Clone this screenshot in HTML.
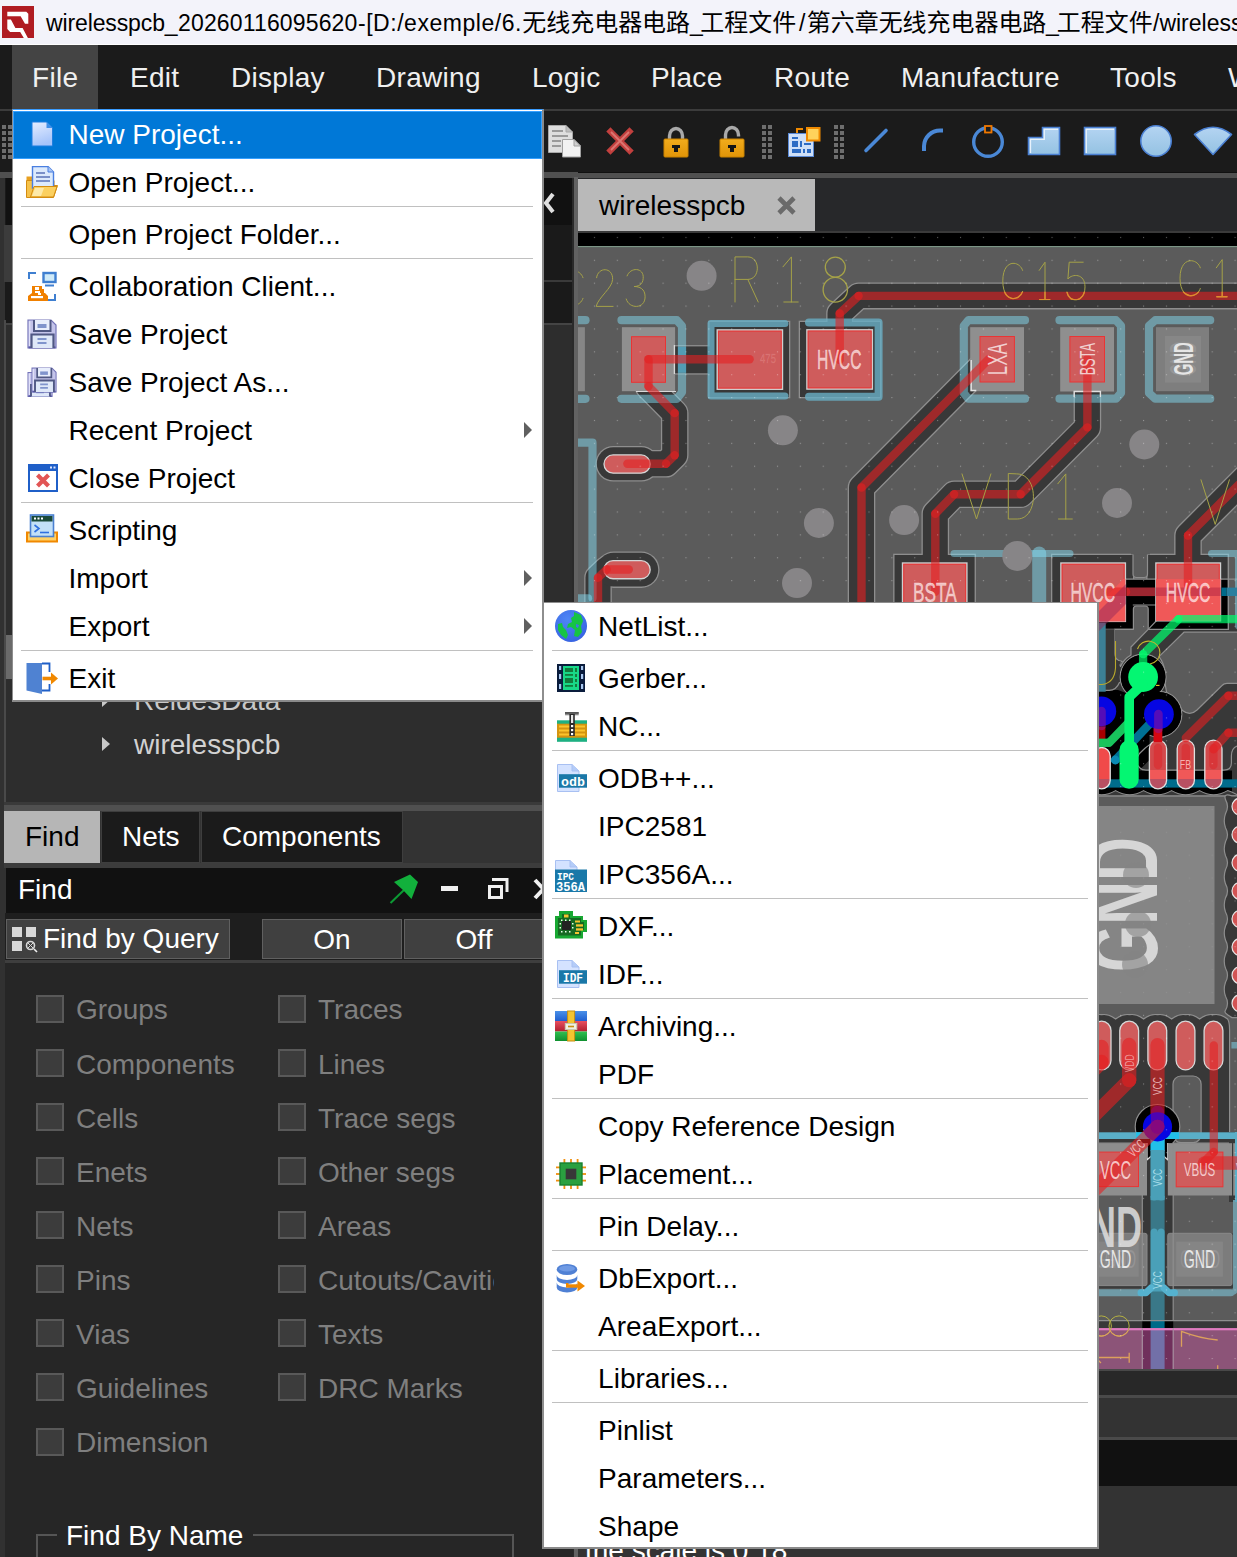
<!DOCTYPE html>
<html><head><meta charset="utf-8">
<style>
*{box-sizing:border-box;margin:0;padding:0}
html,body{width:1237px;height:1557px;overflow:hidden;background:#2b2b2b}
body{font-family:"Liberation Sans",sans-serif;position:relative;color:#fff}
.abs{position:absolute}
#title{left:0;top:0;width:1237px;height:45px;background:#f3f3fa;overflow:hidden;border-bottom:1px solid #fff}
#title span{position:absolute;top:8px;font-size:23px;line-height:30px;color:#000;white-space:nowrap}
#menubar{left:0;top:45px;width:1237px;height:64px;background:#1b1b1b;overflow:hidden}
#menubar .mi{position:absolute;top:0;height:64px;line-height:65px;font-size:28px;letter-spacing:0.3px;color:#f0f0f0;white-space:nowrap}
#toolbar{left:0;top:109px;width:1237px;height:63px;background:#1b1b1b;border-top:2px solid #3c3c3c}
.menu{background:#fff;border:1px solid #8e8e8e;border-right:2px solid #8a8a8a;border-bottom:2px solid #8a8a8a;color:#000;font-size:28px;letter-spacing:0}
.menu .it{position:absolute;left:0;right:0;height:48px;line-height:48px;white-space:nowrap}
.menu .it.hl{background:#0078d7;border:1px solid #35a0ff;color:#fff;left:0;right:0}
.menu .it b{font-weight:normal;position:absolute;left:55.500px;top:0}
.menu .it.hl b{left:54.500px;top:-1px}
.menu .sep{position:absolute;left:8px;right:9px;height:1px;background:#c0c0c0;margin-top:-1px}
#fm{border-top-color:#3a9cff}
#sm{border-top-width:1.500px;border-left-width:2.300px}
#sm .it b{left:54.300px}
#sm svg{left:11.500px}
.menu .arr{position:absolute;right:10px;top:15px;width:0;height:0;border-left:8px solid #606060;border-top:8px solid transparent;border-bottom:8px solid transparent}
.menu svg{position:absolute;left:13px}
.menu .it.hl svg{left:12px;margin-top:-1px}
#left{left:0;top:172px;width:578px;height:1385px;background:#313131;overflow:hidden}
#left .t{position:absolute;font-size:28px;letter-spacing:0;line-height:32px;white-space:nowrap}
.cb{position:absolute;width:28px;height:28px;background:#3c3c3c;border:2px solid #595959}
.cl{position:absolute;font-size:28px;letter-spacing:0;line-height:32px;color:#7f7f7f;white-space:nowrap}
.btn{position:absolute;background:#404040;border:1px solid #606060;color:#fff;font-size:28px;letter-spacing:0;text-align:center;white-space:nowrap}
</style></head>
<body>
<!-- TITLE BAR -->
<div id="title" class="abs">
<svg class="abs" style="left:0;top:0" width="40" height="45" viewBox="0 0 40 45"><rect x="2" y="6" width="32" height="32" fill="#b01c22"/><path d="M7.300 11.700 H26.300 L28.300 13.700 V23.800 H25 L20.600 16.200 H7.300Z M7.300 19.400 H10.900 L15.400 27.900 H22.600 L27.900 38 H23.800 L20.200 31.900 H10.100 L7.300 29.100Z" fill="#fff"/></svg>
<svg class="abs" style="left:0;top:0" width="1237" height="45" viewBox="0 0 1237 45"><g fill="#000" font-size="24" font-family="'Liberation Sans','Noto Sans CJK SC',sans-serif"><text x="522.3" y="30.6" textLength="167.7" lengthAdjust="spacingAndGlyphs">无线充电器电路</text><text x="700.3" y="30.6" textLength="95.8" lengthAdjust="spacingAndGlyphs">工程文件</text><text x="806.8" y="30.6" textLength="239.5" lengthAdjust="spacingAndGlyphs">第六章无线充电器电路</text><text x="1056.8" y="30.6" textLength="95.8" lengthAdjust="spacingAndGlyphs">工程文件</text></g></svg>
<span id="t1" style="left:46px;letter-spacing:-0.12px">wirelesspcb_</span><span id="t2" style="left:178px;letter-spacing:0.15px">20260116095620</span><span id="t3" style="left:358px;letter-spacing:0.53px">-[D:/exemple/6.</span><span id="t4" style="left:690px">_</span><span id="t5" style="left:799px">/</span><span id="t6" style="left:1046px">_</span><span id="t7" style="left:1153px">/wireless</span>
</div>
<!-- MENUBAR -->
<div id="menubar" class="abs">
<div class="abs" style="left:12px;top:0;width:86px;height:64px;background:#444"></div>
<div class="mi" style="left:32px">File</div>
<div class="mi" style="left:130px">Edit</div>
<div class="mi" style="left:231px">Display</div>
<div class="mi" style="left:376px">Drawing</div>
<div class="mi" style="left:532px">Logic</div>
<div class="mi" style="left:651px">Place</div>
<div class="mi" style="left:774px">Route</div>
<div class="mi" style="left:901px">Manufacture</div>
<div class="mi" style="left:1110px">Tools</div>
<div class="mi" style="left:1228px">Window</div>
</div>
<div id="toolbar" class="abs"></div>
<svg class="abs" style="left:0;top:111px" width="1237" height="61" viewBox="0 111 1237 61">
<defs><linearGradient id="lb" x1="0" y1="0" x2="0" y2="1"><stop offset="0" stop-color="#b4d4f2"/><stop offset="1" stop-color="#94c2e2"/></linearGradient>
<linearGradient id="gold" x1="0" y1="0" x2="0" y2="1"><stop offset="0" stop-color="#f2ac1c"/><stop offset="1" stop-color="#e09408"/></linearGradient></defs>
<g fill="#6e6e6e"><rect x="2" y="125" width="4" height="4"/><rect x="2" y="131" width="4" height="4"/><rect x="2" y="137" width="4" height="4"/><rect x="2" y="143" width="4" height="4"/><rect x="2" y="149" width="4" height="4"/><rect x="2" y="155" width="4" height="4"/><rect x="8" y="125" width="4" height="4"/><rect x="8" y="131" width="4" height="4"/><rect x="8" y="137" width="4" height="4"/><rect x="8" y="143" width="4" height="4"/><rect x="8" y="149" width="4" height="4"/><rect x="8" y="155" width="4" height="4"/><rect x="762" y="125" width="4" height="4"/><rect x="762" y="131" width="4" height="4"/><rect x="762" y="137" width="4" height="4"/><rect x="762" y="143" width="4" height="4"/><rect x="762" y="149" width="4" height="4"/><rect x="762" y="155" width="4" height="4"/><rect x="768" y="125" width="4" height="4"/><rect x="768" y="131" width="4" height="4"/><rect x="768" y="137" width="4" height="4"/><rect x="768" y="143" width="4" height="4"/><rect x="768" y="149" width="4" height="4"/><rect x="768" y="155" width="4" height="4"/><rect x="834" y="125" width="4" height="4"/><rect x="834" y="131" width="4" height="4"/><rect x="834" y="137" width="4" height="4"/><rect x="834" y="143" width="4" height="4"/><rect x="834" y="149" width="4" height="4"/><rect x="834" y="155" width="4" height="4"/><rect x="840" y="125" width="4" height="4"/><rect x="840" y="131" width="4" height="4"/><rect x="840" y="137" width="4" height="4"/><rect x="840" y="143" width="4" height="4"/><rect x="840" y="149" width="4" height="4"/><rect x="840" y="155" width="4" height="4"/></g>
<!-- copy docs -->
<path d="M548.5 125.5 H566 L572.5 132 V152.5 H548.5Z" fill="#dedede" stroke="#a8a8a8"/><path d="M566 125.5 V132 H572.5" fill="#bdbdbd" stroke="#a8a8a8"/>
<g stroke="#9a9a9a" stroke-width="2"><path d="M552 131 H563 M552 136 H568 M552 141 H561 M552 146 H561"/></g>
<path d="M562.5 139.5 H574 L580.5 146 V157 H562.5Z" fill="#f2f2f2" stroke="#a0a0a0"/><path d="M574 139.5 V146 H580.5Z" fill="#cfcfcf" stroke="#a0a0a0"/>
<!-- red X -->
<path d="M610.500 131.500 L629.500 150.500 M629.500 131.500 L610.500 150.500" stroke="#c2403e" stroke-width="6" stroke-linecap="square"/><path d="M611 132 L629 150 M629 132 L611 150" stroke="#dc7672" stroke-width="1.800"/>
<!-- lock -->
<path d="M669.5 141 V136 A6.5 7.5 0 0 1 682.5 136 V141" fill="none" stroke="#a9a9a9" stroke-width="3.4"/>
<rect x="664" y="139" width="24" height="18" rx="1" fill="url(#gold)" stroke="#c98200"/><path d="M672 145 H680 V148 H678 V152 H674 V148 H672Z" fill="#151515"/>
<!-- unlock -->
<path d="M725.5 141 V135 A6.5 7.5 0 0 1 738.5 135 V136.5" fill="none" stroke="#a9a9a9" stroke-width="3.4"/>
<rect x="720" y="139" width="24" height="18" rx="1" fill="url(#gold)" stroke="#c98200"/><path d="M728 145 H736 V148 H734 V152 H730 V148 H728Z" fill="#151515"/>
<!-- property table -->
<rect x="788.5" y="133.5" width="25" height="23" fill="#cfe0f8" stroke="#5b8bd8"/>
<g fill="#2d6cc4"><rect x="792" y="137" width="6" height="2"/><rect x="792" y="141" width="6" height="6"/><rect x="792" y="149" width="9" height="4"/><rect x="803" y="149" width="2" height="4"/><rect x="807" y="149" width="4" height="4"/><rect x="800" y="141" width="2" height="6"/><rect x="804" y="143" width="7" height="2"/></g>
<path d="M797 133 V129 H803" fill="none" stroke="#f08a00" stroke-width="2"/>
<rect x="807" y="128" width="12.5" height="12.5" fill="#ffd25c" stroke="#f08a00" stroke-width="2"/>
<!-- line, arc, circle -->
<path d="M866 150.5 L886 130.5" stroke="#4a88d6" stroke-width="3.6" stroke-linecap="round"/>
<path d="M924 151 V146 A16 16 0 0 1 940 130.5 H943" fill="none" stroke="#4a88d6" stroke-width="4"/>
<circle cx="988" cy="142" r="14.3" fill="none" stroke="#4a88d6" stroke-width="3.4"/><rect x="985" y="126" width="6.5" height="6.5" fill="#1b1b1b" stroke="#f07800" stroke-width="1.8"/>
<!-- filled shapes -->
<path d="M1028.5 154.5 V137.5 H1042.5 V127.5 H1059.5 V154.5Z" fill="url(#lb)" stroke="#4a7fd2" stroke-width="1.6"/><path d="M1030.5 153 V139.3 H1044.3 V129.3 H1058" fill="none" stroke="#e8f2fc" stroke-width="1.3"/>
<rect x="1084.5" y="127.5" width="31" height="27" fill="url(#lb)" stroke="#4a7fd2" stroke-width="1.6"/><path d="M1086.3 153 V129.3 H1114" fill="none" stroke="#e8f2fc" stroke-width="1.3"/>
<circle cx="1156" cy="141" r="15.2" fill="url(#lb)" stroke="#4a7fd2" stroke-width="1.6"/>
<path d="M1194.5 134.5 Q1213 120 1231.5 134.5 L1213 154.5Z" fill="url(#lb)" stroke="#4a7fd2" stroke-width="1.6" stroke-linejoin="round"/>
</svg>
<!-- MAIN placeholder sections get added below -->
<div id="left" class="abs">
<div class="abs" style="left:0;top:0;width:578px;height:6px;background:#505050"></div>
<div class="abs" style="left:5px;top:6px;width:568px;height:145px;background:#1a1a1a"></div>
<div class="abs" style="left:5px;top:151px;width:568px;height:479px;background:#2d2d2d;border-top:2px solid #444"></div>
<div class="abs" style="left:544px;top:6px;width:29px;height:47px;background:#111"></div>
<div class="abs" style="left:4px;top:148px;width:2px;height:482px;background:#4a4a4a"></div>
<div class="abs" style="left:6px;top:6px;width:6px;height:46.500px;background:#111"></div>
<div class="abs" style="left:4px;top:52.500px;width:8px;height:57px;background:#3c3c3c"></div>
<div class="abs" style="left:6px;top:463px;width:6px;height:44px;background:#6a6a6a"></div>
<div class="abs" style="left:544px;top:108px;width:29px;height:2px;background:#3a3a3a"></div>
<svg class="abs" style="left:544px;top:20px" width="12" height="22" viewBox="0 0 12 22"><path d="M9 2 L2 11 L9 20" fill="none" stroke="#e0e0e0" stroke-width="4"/></svg>
<div class="abs" style="left:572px;top:6px;width:2px;height:1379px;background:#2a2a2a"></div><div class="abs" style="left:574px;top:5px;width:4px;height:1380px;background:#626262"></div>
<!-- tree -->
<div class="t" style="left:134px;top:513.400px;color:#c8c8c8">ReidesData</div>
<div class="t" style="left:134px;top:557px;color:#d2d2d2">wirelesspcb</div>
<svg class="abs" style="left:101px;top:564px" width="10" height="16"><path d="M1 1 L9 8 L1 15Z" fill="#c8c8c8"/></svg>
<svg class="abs" style="left:101px;top:520.400px" width="10" height="16"><path d="M1 1 L9 8 L1 15Z" fill="#c8c8c8"/></svg>
<!-- splitter -->
<div class="abs" style="left:4px;top:630px;width:569px;height:9px;background:#505050;border-top:3px solid #3a3a3a"></div>
<!-- tabs -->
<div class="abs" style="left:4px;top:639px;width:569px;height:52px;background:#333"></div>
<div class="abs" style="left:4px;top:639px;width:96px;height:52px;background:#b6b6b6"></div>
<div class="abs" style="left:101px;top:639px;width:99px;height:52px;background:#1b1b1b;border:1px solid #3e3e3e"></div>
<div class="abs" style="left:201px;top:639px;width:202px;height:52px;background:#1b1b1b;border:1px solid #3e3e3e"></div>
<div class="t" style="left:25px;top:649px;color:#000">Find</div>
<div class="t" style="left:122px;top:649px;color:#fff">Nets</div>
<div class="t" style="left:222px;top:649px;color:#fff">Components</div>
<div class="abs" style="left:4px;top:691px;width:569px;height:5px;background:#3c3c3c"></div>
<!-- find header -->
<div class="abs" style="left:6px;top:696px;width:567px;height:45px;background:#111"></div>
<div class="t" style="left:18px;top:702px;color:#fff">Find</div>
<svg class="abs" style="left:388px;top:700px" width="170" height="36" viewBox="388 872 170 36">
<path d="M390.500 903 L404 890" stroke="#0c9a34" stroke-width="2"/><path d="M394 882 L410 874.500 L418 882 L411.500 899 L403 890Z" fill="#12b03c"/>
<rect x="441" y="886" width="17" height="5" fill="#f0f0f0"/>
<path d="M492 879.5 H507 V892" fill="none" stroke="#f0f0f0" stroke-width="3"/><rect x="489.5" y="886.5" width="12" height="11" fill="#111" stroke="#f0f0f0" stroke-width="3"/>
<path d="M535 880 L552 898 M552 880 L535 898" stroke="#f0f0f0" stroke-width="4"/>
</svg>
<!-- find toolbar -->
<div class="abs" style="left:5px;top:741px;width:568px;height:50px;background:#1e1e1e"></div>
<div class="btn" style="left:6px;top:747px;width:224px;height:40px;line-height:38px;text-align:left;padding-left:36px">Find by Query</div>
<svg class="abs" style="left:11px;top:754px" width="28" height="28" viewBox="0 0 28 28"><g fill="#d8d8d8"><rect x="1" y="1" width="10" height="10"/><rect x="15" y="1" width="10" height="10"/><rect x="1" y="15" width="10" height="10"/></g><circle cx="19.5" cy="19.5" r="4" fill="none" stroke="#d8d8d8" stroke-width="1.6"/><path d="M16 16 L23 23 M23 16 L16 23" stroke="#d8d8d8" stroke-width="1"/><path d="M23 23 L26 26" stroke="#f0f0f0" stroke-width="1.6"/></svg>
<div class="btn" style="left:262px;top:747px;width:140px;height:40px;line-height:39px">On</div>
<div class="btn" style="left:404px;top:747px;width:140px;height:40px;line-height:39px">Off</div>
<!-- checkbox panel -->
<div class="abs" style="left:5px;top:788px;width:568px;height:597px;background:#262626;border-top:3px solid #3e3e3e"></div>
<div class="cb" style="left:36px;top:822.9px"></div><div class="cl" style="left:76px;top:822.4px">Groups</div><div class="cb" style="left:278px;top:822.9px"></div><div class="cl" style="left:318px;top:822.4px;max-width:176px;overflow:hidden">Traces</div><div class="cb" style="left:36px;top:877.0px"></div><div class="cl" style="left:76px;top:876.5px">Components</div><div class="cb" style="left:278px;top:877.0px"></div><div class="cl" style="left:318px;top:876.5px;max-width:176px;overflow:hidden">Lines</div><div class="cb" style="left:36px;top:931.0px"></div><div class="cl" style="left:76px;top:930.5px">Cells</div><div class="cb" style="left:278px;top:931.0px"></div><div class="cl" style="left:318px;top:930.5px;max-width:176px;overflow:hidden">Trace segs</div><div class="cb" style="left:36px;top:985.1px"></div><div class="cl" style="left:76px;top:984.6px">Enets</div><div class="cb" style="left:278px;top:985.1px"></div><div class="cl" style="left:318px;top:984.6px;max-width:176px;overflow:hidden">Other segs</div><div class="cb" style="left:36px;top:1039.2px"></div><div class="cl" style="left:76px;top:1038.7px">Nets</div><div class="cb" style="left:278px;top:1039.2px"></div><div class="cl" style="left:318px;top:1038.7px;max-width:176px;overflow:hidden">Areas</div><div class="cb" style="left:36px;top:1093.2px"></div><div class="cl" style="left:76px;top:1092.7px">Pins</div><div class="cb" style="left:278px;top:1093.2px"></div><div class="cl" style="left:318px;top:1092.7px;max-width:176px;overflow:hidden">Cutouts/Cavities</div><div class="cb" style="left:36px;top:1147.3px"></div><div class="cl" style="left:76px;top:1146.8px">Vias</div><div class="cb" style="left:278px;top:1147.3px"></div><div class="cl" style="left:318px;top:1146.8px;max-width:176px;overflow:hidden">Texts</div><div class="cb" style="left:36px;top:1201.4px"></div><div class="cl" style="left:76px;top:1200.9px">Guidelines</div><div class="cb" style="left:278px;top:1201.4px"></div><div class="cl" style="left:318px;top:1200.9px;max-width:176px;overflow:hidden">DRC Marks</div><div class="cb" style="left:36px;top:1255.5px"></div><div class="cl" style="left:76px;top:1255.0px">Dimension</div>
<div class="abs" style="left:36px;top:1362px;width:478px;height:30px;border:2px solid #555;border-bottom:none"></div>
<div class="t" style="left:57px;top:1348px;color:#fff;background:#262626;padding:0 10px 0 9px">Find By Name</div>
</div>
<!--LEFT-->
<!--PCB--><div class="abs" style="left:578px;top:172px;width:659px;height:6px;background:#505050;border-top:1px solid #111"></div>
<div class="abs" style="left:578px;top:178px;width:659px;height:55px;background:#27282a"></div>
<div class="abs" style="left:578px;top:179px;width:237px;height:52px;background:#b9b9b9;color:#000;font-size:28px;line-height:53.500px;padding-left:21px">wirelesspcb</div>
<svg class="abs" style="left:776px;top:195px" width="21" height="21" viewBox="0 0 21 21"><path d="M3 3 L18 18 M18 3 L3 18" stroke="#6a6a6a" stroke-width="4.6"/></svg>
<div class="abs" style="left:578px;top:231px;width:659px;height:2px;background:#3a3a3a"></div>
<div class="abs" style="left:578px;top:1369px;width:659px;height:188px;background:#333"></div>
<div class="abs" style="left:578px;top:1369px;width:659px;height:26px;background:#282828;border-top:2px solid #484848"></div>
<div class="abs" style="left:578px;top:1395px;width:659px;height:3px;background:#4a4a4a"></div>
<div class="abs" style="left:578px;top:1437px;width:659px;height:3px;background:#4a4a4a"></div>
<div class="abs" style="left:578px;top:1440px;width:659px;height:46px;background:#111"></div>
<div class="abs" style="left:585px;top:1535px;font-size:28px;line-height:32px;color:#fff;white-space:nowrap">the scale is 0.18</div>
<svg class="abs" style="left:0;top:0" width="1237" height="1557" viewBox="0 0 1237 1557" font-family="Liberation Sans, sans-serif"><defs><clipPath id="pcbclip"><rect x="578" y="233" width="659" height="1136"/></clipPath></defs><g clip-path="url(#pcbclip)"><rect x="578" y="233" width="659" height="13.5" fill="#000"/><rect x="578" y="246" width="659" height="1.6" fill="#7c9486"/>
<rect x="578" y="247.6" width="659" height="1121.4" fill="#5b5b5b"/>
<rect x="673.7" y="345.1" width="39.6" height="29.5" rx="0" fill="#8e8e8e"/>
<polyline points="648.5,385 648.5,386.4 674.7,413.1 674.7,455.3 666,463.7 627.4,463.7" fill="none" stroke="#8e8e8e" stroke-width="27.6" stroke-linejoin="round" stroke-linecap="round"/>
<rect x="595.5" y="446" width="63.5" height="35.6" rx="17.8" fill="#8e8e8e"/>
<polyline points="628.8,569.5 606.7,569.5 598,577.8 598,615" fill="none" stroke="#8e8e8e" stroke-width="27.6" stroke-linejoin="round" stroke-linecap="round"/>
<rect x="595.5" y="551.5" width="64" height="36.4" rx="18.2" fill="#8e8e8e"/>
<rect x="708.2" y="320.7" width="82.1" height="77.6" rx="0" fill="#8e8e8e"/>
<rect x="798.7" y="320.7" width="82.6" height="77.6" rx="0" fill="#8e8e8e"/>
<polyline points="839.7,330 839.7,313.4 858.6,295.9 1250,295.9" fill="none" stroke="#8e8e8e" stroke-width="27.0" stroke-linejoin="round" stroke-linecap="round"/>
<polyline points="988.7,359.2 861.5,487.5 861.5,615" fill="none" stroke="#8e8e8e" stroke-width="27.6" stroke-linejoin="round" stroke-linecap="round"/>
<polyline points="1087.4,380 1087.4,427.4 1020.7,494.3 954.2,494.3 935.3,513.7 935.3,570" fill="none" stroke="#8e8e8e" stroke-width="27.6" stroke-linejoin="round" stroke-linecap="round"/>
<polyline points="1250,473.5 1188,535.5 1188,570" fill="none" stroke="#8e8e8e" stroke-width="27.6" stroke-linejoin="round" stroke-linecap="round"/>
<rect x="893.2" y="553.7" width="82.7" height="87.6" rx="0" fill="#8e8e8e"/>
<rect x="1051" y="553.7" width="83.3" height="87.6" rx="0" fill="#8e8e8e"/>
<rect x="1146.2" y="553.7" width="82.9" height="76.9" rx="0" fill="#8e8e8e"/>
<rect x="675" y="346.4" width="37" height="26.9" rx="0" fill="#383838"/>
<polyline points="648.5,385 648.5,386.4 674.7,413.1 674.7,455.3 666,463.7 627.4,463.7" fill="none" stroke="#383838" stroke-width="25" stroke-linejoin="round" stroke-linecap="round"/>
<rect x="596.8" y="447.3" width="60.9" height="33" rx="16.5" fill="#383838"/>
<polyline points="628.8,569.5 606.7,569.5 598,577.8 598,615" fill="none" stroke="#383838" stroke-width="25" stroke-linejoin="round" stroke-linecap="round"/>
<rect x="596.8" y="552.8" width="61.4" height="33.8" rx="16.9" fill="#383838"/>
<rect x="709.5" y="322" width="79.5" height="75" rx="0" fill="#383838"/>
<rect x="800" y="322" width="80" height="75" rx="0" fill="#383838"/>
<polyline points="839.7,330 839.7,313.4 858.6,295.9 1250,295.9" fill="none" stroke="#383838" stroke-width="24.4" stroke-linejoin="round" stroke-linecap="round"/>
<polyline points="988.7,359.2 861.5,487.5 861.5,615" fill="none" stroke="#383838" stroke-width="25" stroke-linejoin="round" stroke-linecap="round"/>
<polyline points="1087.4,380 1087.4,427.4 1020.7,494.3 954.2,494.3 935.3,513.7 935.3,570" fill="none" stroke="#383838" stroke-width="25" stroke-linejoin="round" stroke-linecap="round"/>
<polyline points="1250,473.5 1188,535.5 1188,570" fill="none" stroke="#383838" stroke-width="25" stroke-linejoin="round" stroke-linecap="round"/>
<rect x="894.5" y="555" width="80.1" height="85" rx="0" fill="#383838"/>
<rect x="1052.3" y="555" width="80.7" height="85" rx="0" fill="#383838"/>
<rect x="1147.5" y="555" width="80.3" height="74.3" rx="0" fill="#383838"/>
<rect x="1090" y="622" width="150" height="174" fill="#383838"/>
<rect x="1090" y="579.100" width="137.500" height="50.200" fill="#000"/>
<path d="M1124 579.100 H1240" stroke="#8e8e8e" stroke-width="1.200"/>
<path d="M1090 629.300 H1228.400 V555" fill="none" stroke="#8e8e8e" stroke-width="1.200"/>
<path d="M1183.900 632.200 H1240 V683.300 H1227 Q1224 683.300 1222 685.500 L1197 710 Q1190 716.500 1182.500 710.500 Q1176 700 1166.500 692 Q1164 680 1165 672 Q1164 663 1159 656.600Z" fill="#5b5b5b" stroke="#8e8e8e" stroke-width="1.200" stroke-linejoin="round"/>
<path d="M1136.500 606 H1145 Q1148.200 606 1148.200 609 V629.300 L1131 647 V655 A25 25 0 0 0 1120.500 666.500 Q1118 661.500 1122 661.400 Q1114.400 661 1114.400 652 V629.300 H1133.400 V609 Q1133.400 606 1136.500 606Z" fill="#5b5b5b" stroke="#8e8e8e" stroke-width="1.200" stroke-linejoin="round"/>
<path d="M1132.800 605 H1165 Q1171 605 1167 609.500 L1148.200 629.300" fill="none" stroke="#8e8e8e" stroke-width="1.200"/>
<g fill="#000" stroke="#8e8e8e" stroke-width="1.200"><circle cx="1143.100" cy="677" r="22.900"/><circle cx="1158.900" cy="714.200" r="22.900"/><circle cx="1101.300" cy="711.300" r="22.900"/></g>
<path d="M1090 690 H1118 L1126 693 L1150 693 L1160 735 H1149.500 V760 L1139 770.400 H1232 V795 H1090Z" fill="#000"/>
<g fill="#000"><circle cx="1143.100" cy="677" r="22.300"/><circle cx="1158.900" cy="714.200" r="22.300"/><circle cx="1101.300" cy="711.300" r="22.300"/></g>
<path d="M1090 629.300 H1114.400 V655 Q1114.400 661.400 1121 661.400 A25 25 0 0 0 1119 684 Q1116 691 1108 690.500 H1090Z" fill="#383838"/>
<path d="M1090 690.300 H1108 Q1116 691 1119.700 682" fill="none" stroke="#8e8e8e" stroke-width="1.200"/>
<path d="M1166 736 Q1150 742 1139.500 753.500 Q1133 762 1140 768 Q1142 770.100 1146 770.100 H1224 Q1231.400 770.100 1231.400 763 V756 Q1231.400 748 1237 746" fill="none" stroke="#8e8e8e" stroke-width="1.200"/>
<path d="M1087.600 790.600 Q1094.6 794.800 1101.6 794.800 Q1108.6 794.800 1115.6 790.600 Q1122.6 794.800 1129.6 794.800 Q1136.6 794.800 1143.6 790.600 Q1150.6 794.800 1157.6 794.800 Q1164.6 794.800 1171.6 790.600 Q1178.6 794.800 1185.6 794.800 Q1192.6 794.800 1199.6 790.600 Q1206.6 794.800 1213.6 794.800 Q1220.6 794.800 1227.6 790.600 Q1232 792 1240 796 V796.500 H1090Z" fill="#383838"/><path d="M1087.600 790.600 Q1094.6 794.800 1101.6 794.800 Q1108.6 794.800 1115.6 790.600 Q1122.6 794.800 1129.6 794.800 Q1136.6 794.800 1143.6 790.600 Q1150.6 794.800 1157.6 794.800 Q1164.6 794.800 1171.6 790.600 Q1178.6 794.800 1185.6 794.800 Q1192.6 794.800 1199.6 790.600 Q1206.6 794.800 1213.6 794.800 Q1220.6 794.800 1227.6 790.600 Q1232 792 1240 796" fill="none" stroke="#8e8e8e" stroke-width="1.100"/>
<path d="M1090 796 H1240" stroke="#8e8e8e" stroke-width="1.400"/>
<rect x="1098" y="622.700" width="7.700" height="69" fill="rgba(60,128,150,1)"/>
<line x1="1158.900" y1="714.200" x2="1115.500" y2="760" stroke="rgba(0,160,210,0.7)" stroke-width="8.400" stroke-linecap="round"/>
<rect x="1090" y="779.300" width="150" height="8.300" fill="rgb(0,108,140)"/>
<rect x="1090" y="806" width="124.500" height="198" fill="#858585"/>
<path d="M1240 796 H1232 Q1223 792.6 1225.500 799.6 Q1229.500 806.6 1225.500 813.6 Q1223 820.7 1225.500 827.7 Q1229.500 834.7 1225.500 841.7 Q1223 848.8 1225.500 855.8 Q1229.500 862.8 1225.500 869.8 Q1223 876.9 1225.500 883.9 Q1229.500 890.9 1225.500 897.9 Q1223 905 1225.500 912 Q1229.500 919 1225.500 926 Q1223 933.1 1225.500 940.1 Q1229.500 947.1 1225.500 954.1 Q1223 961.2 1225.500 968.2 Q1229.500 975.2 1225.500 982.2 Q1223 989.3 1225.500 996.3 Q1229.500 1003.3 1225.500 1010.3 Q1223 1013 1232 1017.600 H1240Z" fill="#383838" stroke="#8e8e8e" stroke-width="1.200"/>
<rect x="1232" y="798" width="20" height="17.200" rx="8.600" fill="#d25454" stroke="#e8e8e8" stroke-width="1.200"/>
<rect x="1232" y="826.1" width="20" height="17.200" rx="8.600" fill="#d25454" stroke="#e8e8e8" stroke-width="1.200"/>
<rect x="1232" y="854.2" width="20" height="17.200" rx="8.600" fill="#d25454" stroke="#e8e8e8" stroke-width="1.200"/>
<rect x="1232" y="882.3" width="20" height="17.200" rx="8.600" fill="#d25454" stroke="#e8e8e8" stroke-width="1.200"/>
<rect x="1232" y="910.4" width="20" height="17.200" rx="8.600" fill="#d25454" stroke="#e8e8e8" stroke-width="1.200"/>
<rect x="1232" y="938.5" width="20" height="17.200" rx="8.600" fill="#d25454" stroke="#e8e8e8" stroke-width="1.200"/>
<rect x="1232" y="966.6" width="20" height="17.200" rx="8.600" fill="#d25454" stroke="#e8e8e8" stroke-width="1.200"/>
<rect x="1232" y="994.7" width="20" height="17.200" rx="8.600" fill="#d25454" stroke="#e8e8e8" stroke-width="1.200"/>
<text transform="translate(1156.500,972) rotate(-90)" font-size="98" font-weight="bold" textLength="135" lengthAdjust="spacingAndGlyphs" fill="#d6d6d6">GND</text>
<g fill="rgba(133,133,133,0.62)"><circle cx="1136" cy="875" r="13"/><circle cx="1138" cy="924" r="13"/><circle cx="1135" cy="964.500" r="13"/></g>
<path d="M1090 1019 Q1094.6 1013.500 1101.6 1014.700 Q1108.6 1013.500 1115.6 1019 Q1122.6 1013.500 1129.6 1014.700 Q1136.6 1013.500 1143.6 1019 Q1150.6 1013.500 1157.6 1014.700 Q1164.6 1013.500 1171.6 1019 Q1178.6 1013.500 1185.6 1014.700 Q1192.6 1013.500 1199.6 1019 Q1206.6 1013.500 1213.6 1014.700 Q1220.6 1013.500 1227.6 1019 Q1229.600 1022 1229.600 1030 V1143 H1090Z" fill="#383838" stroke="#8e8e8e" stroke-width="1.200"/>
<rect x="1229" y="1132" width="12" height="70" fill="#383838"/>
<rect x="1173" y="1076" width="28.100" height="66.600" rx="8" fill="#5b5b5b" stroke="#8e8e8e" stroke-width="1.200"/>
<rect x="1231.400" y="1042" width="8" height="6.500" fill="#6f9aa6"/>
<circle cx="1157.500" cy="1126.800" r="22.300" fill="#000" stroke="#8e8e8e" stroke-width="1.200"/>
<rect x="1090" y="1132.300" width="150" height="6.700" fill="#5aafc8"/>
<rect x="1136" y="1132.300" width="43" height="6.700" fill="#22c0e8"/>
<rect x="1142.300" y="1143" width="30.900" height="178" fill="#383838"/>
<path d="M1147 1139 H1167.800 V1158.600 L1157.500 1150 L1147 1158.600Z" fill="#000"/>
<path d="M1147 1143 V1160 L1157.500 1150.500 L1167.800 1160 V1143" fill="none" stroke="#e0e0e0" stroke-width="1.200"/>
<rect x="1150.600" y="1139" width="14" height="182" fill="#3a7888"/>
<rect x="1150.600" y="1139" width="14" height="12" fill="#22c0e8"/>
<rect x="1150.600" y="1150" width="14" height="50.200" rx="0" fill="#4aa0b8"/><path d="M1150.600 1196 h14 v1 a3.500 3.500 0 0 1 -7 0 a3.500 3.500 0 0 1 -7 0Z" fill="#4aa0b8"/>
<path d="M1150.600 1232 a3.500 3.500 0 0 1 7 0 a3.500 3.500 0 0 1 7 0 V1291.500 H1150.600Z" fill="#4aa0b8"/>
<rect x="1090" y="1143.200" width="57" height="52.300" fill="#8e8e8e"/><rect x="1090" y="1152.100" width="48.500" height="34.500" fill="#cf5c5c" stroke="#ea3434"/>
<rect x="1167.800" y="1143.200" width="64.200" height="52.300" fill="#8e8e8e"/><rect x="1176.200" y="1152.100" width="46.700" height="34.700" fill="#cf5c5c" stroke="#ea3434"/>
<rect x="1233.200" y="1143.200" width="10" height="52.300" fill="#8e8e8e"/><rect x="1235.500" y="1152.100" width="10" height="34.700" fill="#cf5c5c"/>
<rect x="1088.2" y="1233.300" width="61.8" height="55.300" rx="4" fill="#3c3c3c"/>
<rect x="1090" y="1233.300" width="57" height="52.300" rx="2" fill="#7c7c7c" stroke="#8a8a8a" stroke-width="1"/>
<rect x="1090" y="1241.600" width="48.7" height="35.100" fill="#858585"/>
<rect x="1166" y="1233.300" width="69" height="55.300" rx="4" fill="#3c3c3c"/>
<rect x="1167.8" y="1233.300" width="64.2" height="52.300" rx="2" fill="#7c7c7c" stroke="#8a8a8a" stroke-width="1"/>
<rect x="1176.2" y="1241.600" width="46.700" height="35.100" fill="#858585"/>
<path d="M1142.300 1143 V1369 M1173.200 1143 V1369" stroke="#8e8e8e" stroke-width="1.200"/>
<path d="M1090 1292.700 H1141 M1174.500 1292.700 H1230.800" stroke="#6f9aa6" stroke-width="7.100" stroke-linecap="round"/>
<path d="M1141 1292.700 H1146 L1151 1288 M1174.500 1292.700 H1169 L1164 1288" fill="none" stroke="#55b2cf" stroke-width="7" stroke-linecap="round" stroke-linejoin="round"/>
<path d="M1235.500 1200 V1288 Q1235.500 1292.700 1231 1292.700" fill="none" stroke="#6f9aa6" stroke-width="5"/>
<rect x="1235" y="1132" width="4" height="70" fill="#5aafc8"/>
<rect x="1090" y="1320.700" width="150" height="8" fill="#383838"/>
<rect x="1142.300" y="1320.700" width="30.900" height="8" fill="#000"/><rect x="1150.600" y="1320.700" width="14" height="8" fill="#006a88"/>
<path d="M1090 1320.700 H1240" stroke="#8e8e8e" stroke-width="1.200"/>
<rect x="1090" y="1328.400" width="150" height="41" fill="#8c5478"/><rect x="1142.300" y="1328.400" width="30.900" height="41" fill="#70305c"/><rect x="1150.600" y="1328.400" width="14" height="41" fill="#7270a8"/>
<rect x="1090" y="1328.100" width="150" height="2.200" fill="#e07cc0"/>
<path d="M1142.300 1328 V1369 M1173.200 1328 V1369" stroke="#a890a0" stroke-width="1.200"/>
<path d="M1133 553 H1147.500 V574 a3.500 3.500 0 0 1 -3.500 3.500 h-7.500 a3.500 3.500 0 0 1 -3.500 -3.500Z" fill="#5b5b5b" stroke="#8e8e8e" stroke-width="1.200"/><rect x="1131" y="551" width="19" height="3.400" fill="#5b5b5b"/>
<path d="M570 320.2 H585.5" fill="none" stroke="rgba(135,230,255,0.45)" stroke-width="8.2" stroke-linecap="round" stroke-linejoin="round"/>
<path d="M570 398.8 H585.5" fill="none" stroke="rgba(135,230,255,0.45)" stroke-width="8.2" stroke-linecap="round" stroke-linejoin="round"/>
<path d="M621.5 320.2 H676.9 L682 326 V392.3 L676.9 398.8 H621.5" fill="none" stroke="rgba(135,230,255,0.45)" stroke-width="8.2" stroke-linecap="round" stroke-linejoin="round"/>
<path d="M785 323.5 H711 V396 H785" fill="none" stroke="rgba(104,172,194,0.82)" stroke-width="7" stroke-linecap="round" stroke-linejoin="round"/>
<path d="M809 322.5 H878.6 V396.7 H809" fill="none" stroke="rgba(104,172,194,0.82)" stroke-width="8" stroke-linecap="round" stroke-linejoin="round"/>
<path d="M1025 320.2 H968.3 L963.8 325.8 V393 L968.3 398.7 H1025" fill="none" stroke="rgba(135,230,255,0.45)" stroke-width="8.2" stroke-linecap="round" stroke-linejoin="round"/>
<path d="M1059.5 320.2 H1116 L1121 325.8 V393 L1116 398.7 H1059.5" fill="none" stroke="rgba(135,230,255,0.45)" stroke-width="8.2" stroke-linecap="round" stroke-linejoin="round"/>
<path d="M1210.2 320.2 H1155.2 L1149 325.8 V393 L1155.2 398.7 H1210.2" fill="none" stroke="rgba(135,230,255,0.45)" stroke-width="8.2" stroke-linecap="round" stroke-linejoin="round"/>
<path d="M570 442.7 H592.5 V598" fill="none" stroke="rgba(135,230,255,0.45)" stroke-width="8.2" stroke-linecap="round" stroke-linejoin="round"/>
<path d="M570 598.3 H588" fill="none" stroke="rgba(135,230,255,0.45)" stroke-width="8.2" stroke-linecap="round" stroke-linejoin="round"/>
<path d="M954 553.5 H1070" fill="none" stroke="rgba(135,230,255,0.45)" stroke-width="7" stroke-linecap="round" stroke-linejoin="round"/>
<path d="M1039.2 553.5 V615" fill="none" stroke="rgba(135,230,255,0.45)" stroke-width="14" stroke-linecap="round" stroke-linejoin="round"/>
<path d="M1211.5 553.5 H1238.5 V626" fill="none" stroke="rgba(135,230,255,0.45)" stroke-width="7" stroke-linecap="round" stroke-linejoin="round"/>
<circle cx="701.6" cy="275.8" r="15" fill="#878587"/>
<circle cx="782.9" cy="430.3" r="15" fill="#878587"/>
<circle cx="818.9" cy="523" r="15" fill="#878587"/>
<circle cx="797" cy="583.1" r="15" fill="#878587"/>
<circle cx="904.1" cy="520.1" r="15" fill="#878587"/>
<circle cx="1017.3" cy="555.9" r="15" fill="#878587"/>
<circle cx="1144.3" cy="444.5" r="15" fill="#878587"/>
<circle cx="1117" cy="503" r="15" fill="#878587"/>
<rect x="677.9" y="347" width="8.2" height="25.6" fill="rgba(70,185,225,0.45)"/>
<rect x="570" y="327.2" width="14.9" height="64" fill="#868686"/>
<rect x="621.9" y="327.2" width="53.2" height="64" fill="#8f8f8f"/>
<rect x="631.5" y="336.7" width="34" height="45.6" fill="#cf5c5c" stroke="#ea3434" stroke-width="1"/>
<rect x="717.2" y="329.9" width="65.3" height="59.4" fill="#cf5c5c" stroke="#cfcfcf" stroke-width="1.4"/>
<rect x="718.5" y="331.2" width="62.7" height="56.8" fill="none" stroke="#e63a3a" stroke-width="1"/>
<rect x="806.9" y="329.8" width="65.5" height="59.3" fill="#cf5c5c" stroke="#cfcfcf" stroke-width="1.4"/>
<rect x="808.2" y="331.1" width="62.9" height="56.7" fill="none" stroke="#e63a3a" stroke-width="1"/>
<rect x="970.2" y="327.2" width="53.8" height="64" fill="#8f8f8f"/>
<rect x="980" y="336.5" width="34.4" height="45.5" fill="#cf5c5c" stroke="#ea3434" stroke-width="1"/>
<rect x="1060.2" y="327.2" width="53.8" height="64.3" fill="#8f8f8f"/>
<rect x="1069.9" y="336.5" width="34.6" height="45.5" fill="#cf5c5c" stroke="#ea3434" stroke-width="1"/>
<rect x="1156" y="327.2" width="53" height="64" fill="#7e7e7e"/>
<rect x="1165" y="336" width="36" height="46.5" fill="#878787"/>
<path d="M971.2 360 V390.5 H976.3" fill="none" stroke="#e4e4e4" stroke-width="1.4"/>
<path d="M1074.2 397 V391.5 H1100.4 V397" fill="none" stroke="#e0e0e0" stroke-width="1.3"/>
<path d="M674.4 345 V374" stroke="#d8d8d8" stroke-width="1.3"/>
<path d="M636 391.5 H676" stroke="#d8d8d8" stroke-width="1.2"/>
<rect x="604" y="454.95" width="46.2" height="18.2" rx="9.1" fill="#cf5c5c" stroke="#d6d6d6" stroke-width="1.3"/>
<rect x="604" y="560.55" width="46.2" height="18.2" rx="9.1" fill="#cf5c5c" stroke="#d6d6d6" stroke-width="1.3"/>
<rect x="902.5" y="563" width="64.4" height="76.3" fill="#cf5c5c" stroke="#cfcfcf" stroke-width="1.4"/>
<rect x="903.8" y="564.3" width="61.8" height="73.7" fill="none" stroke="#e63a3a" stroke-width="1"/>
<rect x="1060.9" y="563" width="64.5" height="58.4" fill="#cf5c5c" stroke="#cfcfcf" stroke-width="1.4"/>
<rect x="1062.2" y="564.3" width="61.9" height="55.8" fill="none" stroke="#e63a3a" stroke-width="1"/>
<rect x="1155.9" y="563" width="64.6" height="57.8" fill="#cf5c5c" stroke="#cfcfcf" stroke-width="1.4"/>
<rect x="1157.2" y="564.3" width="62" height="55.2" fill="none" stroke="#e63a3a" stroke-width="1"/>
<defs><linearGradient id="pg1" gradientUnits="userSpaceOnUse" x1="0" y1="740" x2="0" y2="789"><stop offset="0" stop-color="#d24a4c"/><stop offset="0.620" stop-color="#d24a4c"/><stop offset="0.620" stop-color="#f05858"/><stop offset="0.802" stop-color="#f05858"/><stop offset="0.802" stop-color="#b85062"/><stop offset="0.971" stop-color="#b85062"/><stop offset="0.971" stop-color="#f05858"/></linearGradient>
<linearGradient id="pg0" gradientUnits="userSpaceOnUse" x1="0" y1="740" x2="0" y2="789"><stop offset="0" stop-color="#f04a4a"/><stop offset="0.802" stop-color="#f04a4a"/><stop offset="0.802" stop-color="#b85062"/><stop offset="0.971" stop-color="#b85062"/><stop offset="0.971" stop-color="#f05858"/></linearGradient></defs>
<rect x="1098" y="726.700" width="7.400" height="17" fill="#a80000"/>
<rect x="1093" y="747.500" width="17.200" height="41.300" rx="8.600" fill="url(#pg0)" stroke="#e8e8e8" stroke-width="1.300"/>
<rect x="1149.4" y="740.100" width="17.200" height="48.700" rx="8.600" fill="url(#pg1)" stroke="#e0e0e0" stroke-width="1.300"/>
<rect x="1177.2" y="740.100" width="17.200" height="48.700" rx="8.600" fill="url(#pg1)" stroke="#e0e0e0" stroke-width="1.300"/>
<rect x="1204.8" y="740.100" width="17.200" height="48.700" rx="8.600" fill="url(#pg1)" stroke="#e0e0e0" stroke-width="1.300"/>
<rect x="1153.500" y="716" width="8.800" height="26" fill="#d40812"/>
<line x1="1158" y1="748" x2="1158" y2="765" stroke="rgba(225,30,35,0.45)" stroke-width="8.400" stroke-linecap="round"/>
<line x1="1185.8" y1="748" x2="1185.8" y2="765" stroke="rgba(225,30,35,0.45)" stroke-width="8.400" stroke-linecap="round"/>
<line x1="1213.4" y1="748" x2="1213.4" y2="765" stroke="rgba(225,30,35,0.45)" stroke-width="8.400" stroke-linecap="round"/>
<line x1="1185.8" y1="738" x2="1228.4" y2="695.8" stroke="rgba(228,31,33,0.6)" stroke-width="8.400" stroke-linecap="round"/>
<line x1="1228.4" y1="695.8" x2="1245" y2="695.8" stroke="rgba(228,31,33,0.6)" stroke-width="8.400" stroke-linecap="round"/>
<line x1="1213.6" y1="749.3" x2="1228.4" y2="732.7" stroke="rgba(228,31,33,0.6)" stroke-width="8.400" stroke-linecap="round"/>
<line x1="1228.4" y1="732.7" x2="1245" y2="732.7" stroke="rgba(228,31,33,0.6)" stroke-width="8.400" stroke-linecap="round"/>
<path d="M1123.500 579.100 H1125.400 V621.400 H1090 V612.600Z" fill="#f05858"/><rect x="1156" y="579.100" width="64.500" height="41.700" fill="#f05858"/>
<line x1="1127" y1="591.800" x2="1155" y2="591.800" stroke="#9c2630" stroke-width="8.600"/>
<line x1="1108" y1="591.800" x2="1126" y2="591.800" stroke="rgba(228,31,33,0.6)" stroke-width="8.600" stroke-linecap="round"/>
<line x1="1155.500" y1="591.800" x2="1220.700" y2="591.800" stroke="rgba(180,40,70,0.55)" stroke-width="8.600"/>
<path d="M1126 584 L1090 620 V640 L1126 604Z" fill="rgba(150,40,90,0.5)"/>
<rect x="1221.400" y="587.600" width="5.200" height="8.400" fill="#006a8a"/><rect x="1226.600" y="587.600" width="14" height="8.400" fill="#2a7f9f"/>
<line x1="1245" y1="619.2" x2="1178.5" y2="619.2" stroke="rgba(0,255,110,0.7)" stroke-width="8.300" stroke-linecap="round"/>
<line x1="1178.5" y1="619.2" x2="1143.1" y2="654.2" stroke="rgba(0,255,110,0.7)" stroke-width="8.300" stroke-linecap="round"/>
<line x1="1143.1" y1="654.2" x2="1143.1" y2="677" stroke="rgba(0,255,110,0.7)" stroke-width="8.300" stroke-linecap="round"/>
<line x1="1129.200" y1="722" x2="1109" y2="742.800" stroke="#18c45c" stroke-width="8.300" stroke-linecap="round"/><line x1="1109" y1="742.800" x2="1090" y2="742.800" stroke="#18c45c" stroke-width="8.300"/>
<circle cx="1143.100" cy="677" r="14.900" fill="#04f672"/>
<path d="M1143 684 L1129.200 697 V745" fill="none" stroke="#04f672" stroke-width="9.600" stroke-linejoin="round" stroke-linecap="round"/>
<rect x="1119.500" y="740.100" width="19.200" height="48.700" rx="9.600" fill="#04f672"/>
<circle cx="1158.9" cy="714.2" r="14.900" fill="#0606e2"/>
<circle cx="1101.3" cy="711.3" r="14.900" fill="#0606e2"/>
<path d="M1158.400 714 V729" stroke="rgba(150,20,150,0.55)" stroke-width="8.600" stroke-linecap="round"/>
<path d="M1101.500 711 V726" stroke="rgba(150,20,150,0.55)" stroke-width="8.600" stroke-linecap="round"/>
<circle cx="1115.200" cy="760" r="4.400" fill="#0a8ab4"/>
<defs><linearGradient id="pg2" gradientUnits="userSpaceOnUse" x1="0" y1="1021" x2="0" y2="1070"><stop offset="0" stop-color="#cf5c5c"/><stop offset="1" stop-color="#cf5c5c"/></linearGradient></defs>
<rect x="1092.2" y="1021.200" width="18.800" height="48.700" rx="9.400" fill="#cf5c5c" stroke="#d8d8d8" stroke-width="1.300"/>
<rect x="1119.8" y="1021.200" width="18.800" height="48.700" rx="9.400" fill="#cf5c5c" stroke="#d8d8d8" stroke-width="1.300"/>
<rect x="1147.9" y="1021.200" width="18.800" height="48.700" rx="9.400" fill="#cf5c5c" stroke="#d8d8d8" stroke-width="1.300"/>
<rect x="1176.1" y="1021.200" width="18.800" height="48.700" rx="9.400" fill="#cf5c5c" stroke="#d8d8d8" stroke-width="1.300"/>
<rect x="1204.1" y="1021.200" width="18.800" height="48.700" rx="9.400" fill="#cf5c5c" stroke="#d8d8d8" stroke-width="1.300"/>
<line x1="1129.2" y1="1045" x2="1129.2" y2="1080.2" stroke="rgba(228,31,33,0.6)" stroke-width="14.3" stroke-linecap="round"/>
<line x1="1129.2" y1="1080.2" x2="1090" y2="1119.4" stroke="rgba(228,31,33,0.6)" stroke-width="14.3" stroke-linecap="round"/>
<line x1="1157.5" y1="1045" x2="1157.5" y2="1126.8" stroke="rgba(228,31,33,0.6)" stroke-width="14.2" stroke-linecap="round"/>
<line x1="1101.6" y1="1047" x2="1101.6" y2="1062" stroke="rgba(228,31,33,0.6)" stroke-width="14.3" stroke-linecap="round"/>
<line x1="1101.6" y1="1062" x2="1085" y2="1078.6" stroke="rgba(228,31,33,0.6)" stroke-width="14.3" stroke-linecap="round"/>
<line x1="1213.8" y1="1045.5" x2="1213.8" y2="1152" stroke="rgba(228,31,33,0.6)" stroke-width="8.3" stroke-linecap="round"/>
<line x1="1213.8" y1="1152" x2="1204.5" y2="1161.5" stroke="rgba(228,31,33,0.6)" stroke-width="8.3" stroke-linecap="round"/>
<line x1="1204.5" y1="1163" x2="1245" y2="1163" stroke="rgba(228,31,33,0.6)" stroke-width="13.7" stroke-linecap="round"/>
<circle cx="1157.500" cy="1126.800" r="14.600" fill="#0606e2"/>
<line x1="1157.5" y1="1126.8" x2="1157.5" y2="1112" stroke="rgba(150,0,130,0.5)" stroke-width="13" stroke-linecap="round"/>
<line x1="1157.5" y1="1126.8" x2="1090" y2="1194.3" stroke="rgba(228,31,33,0.6)" stroke-width="14.2" stroke-linecap="round"/>
<circle cx="1157.500" cy="1126.800" r="7" fill="rgba(110,0,150,0.6)"/>
<line x1="749.6" y1="359.2" x2="648.5" y2="359.2" stroke="rgba(228,31,33,0.6)" stroke-width="8.4" stroke-linecap="round"/>
<line x1="648.5" y1="359.2" x2="648.5" y2="386.4" stroke="rgba(228,31,33,0.6)" stroke-width="8.4" stroke-linecap="round"/>
<line x1="648.5" y1="386.4" x2="674.7" y2="413.1" stroke="rgba(228,31,33,0.6)" stroke-width="8.4" stroke-linecap="round"/>
<line x1="674.7" y1="413.1" x2="674.7" y2="455.3" stroke="rgba(228,31,33,0.6)" stroke-width="8.4" stroke-linecap="round"/>
<line x1="674.7" y1="455.3" x2="666" y2="463.7" stroke="rgba(228,31,33,0.6)" stroke-width="8.4" stroke-linecap="round"/>
<line x1="666" y1="463.7" x2="627.4" y2="463.7" stroke="rgba(228,31,33,0.6)" stroke-width="8.4" stroke-linecap="round"/>
<line x1="628.8" y1="569.5" x2="606.7" y2="569.5" stroke="rgba(228,31,33,0.6)" stroke-width="8.4" stroke-linecap="round"/>
<line x1="606.7" y1="569.5" x2="598" y2="577.8" stroke="rgba(228,31,33,0.6)" stroke-width="8.4" stroke-linecap="round"/>
<line x1="598" y1="577.8" x2="598" y2="615" stroke="rgba(228,31,33,0.6)" stroke-width="8.4" stroke-linecap="round"/>
<line x1="839.7" y1="360" x2="839.7" y2="313.4" stroke="rgba(228,31,33,0.6)" stroke-width="8.4" stroke-linecap="round"/>
<line x1="839.7" y1="313.4" x2="858.6" y2="295.9" stroke="rgba(228,31,33,0.6)" stroke-width="8.4" stroke-linecap="round"/>
<line x1="858.6" y1="295.9" x2="1250" y2="295.9" stroke="rgba(228,31,33,0.6)" stroke-width="8.4" stroke-linecap="round"/>
<line x1="988.7" y1="359.2" x2="861.5" y2="487.5" stroke="rgba(228,31,33,0.6)" stroke-width="8.4" stroke-linecap="round"/>
<line x1="861.5" y1="487.5" x2="861.5" y2="615" stroke="rgba(228,31,33,0.6)" stroke-width="8.4" stroke-linecap="round"/>
<line x1="1087.4" y1="359" x2="1087.4" y2="427.4" stroke="rgba(228,31,33,0.6)" stroke-width="8.4" stroke-linecap="round"/>
<line x1="1087.4" y1="427.4" x2="1020.7" y2="494.3" stroke="rgba(228,31,33,0.6)" stroke-width="8.4" stroke-linecap="round"/>
<line x1="1020.7" y1="494.3" x2="954.2" y2="494.3" stroke="rgba(228,31,33,0.6)" stroke-width="8.4" stroke-linecap="round"/>
<line x1="954.2" y1="494.3" x2="935.3" y2="513.7" stroke="rgba(228,31,33,0.6)" stroke-width="8.4" stroke-linecap="round"/>
<line x1="935.3" y1="513.7" x2="935.3" y2="591.8" stroke="rgba(228,31,33,0.6)" stroke-width="8.4" stroke-linecap="round"/>
<line x1="1250" y1="473.5" x2="1188" y2="535.5" stroke="rgba(228,31,33,0.6)" stroke-width="8.4" stroke-linecap="round"/>
<line x1="1188" y1="535.5" x2="1188" y2="585" stroke="rgba(228,31,33,0.6)" stroke-width="8.4" stroke-linecap="round"/>
<path d="M583.0 277.7 C580.0 267.8 563.0 265.9 563.0 288.0 C563.0 310.1 580.0 308.2 583.0 298.3" fill="none" stroke="#a5a248" stroke-width="1.0" stroke-linecap="round" stroke-linejoin="round"/>
<path d="M596.6 277.7 C597.8 266.7 613.1 266.7 612.6 279.5 C612.2 288.0 598.6 297.2 596.1 306.4 H613.1" fill="none" stroke="#a5a248" stroke-width="1.0" stroke-linecap="round" stroke-linejoin="round"/>
<path d="M627.1 275.9 C630.0 267.0 644.2 267.0 643.2 278.4 C642.8 285.1 637.5 286.5 634.1 286.5 C639.4 286.5 645.1 288.7 645.1 296.8 C645.1 309.3 629.0 309.3 626.2 299.0" fill="none" stroke="#a5a248" stroke-width="1.0" stroke-linecap="round" stroke-linejoin="round"/>
<path d="M735.0 302.0 V256.9 H747.8 C760.5 256.9 760.5 279.4 747.8 279.4 H735.0 M747.8 279.4 L758.2 302.0" fill="none" stroke="#a5a248" stroke-width="1.0" stroke-linecap="round" stroke-linejoin="round"/>
<path d="M783.0 266.8 L791.4 256.9 V302.0 M783.8 302.0 H798.2" fill="none" stroke="#a5a248" stroke-width="1.0" stroke-linecap="round" stroke-linejoin="round"/>
<circle cx="835.3" cy="267.2" r="10" fill="none" stroke="#a5a248" stroke-width="1.3"/><ellipse cx="835.3" cy="289.8" rx="12.2" ry="12.4" fill="none" stroke="#a5a248" stroke-width="1.3"/>
<path d="M1022.6 270.4 C1019.6 260.3 1002.8 258.5 1002.8 280.9 C1002.8 303.3 1019.6 301.5 1022.6 291.4" fill="none" stroke="#a5a248" stroke-width="1.0" stroke-linecap="round" stroke-linejoin="round"/>
<path d="M1039.2 270.4 L1045.0 262.2 V299.6 M1039.7 299.6 H1049.8" fill="none" stroke="#a5a248" stroke-width="1.0" stroke-linecap="round" stroke-linejoin="round"/>
<path d="M1083.2 262.2 H1069.2 L1067.9 279.0 C1072.4 273.4 1085.0 273.4 1085.0 286.9 C1085.0 303.3 1068.8 303.3 1067.0 292.1" fill="none" stroke="#a5a248" stroke-width="1.0" stroke-linecap="round" stroke-linejoin="round"/>
<path d="M1200.3 267.8 C1197.3 257.7 1180.0 255.9 1180.0 278.2 C1180.0 300.4 1197.3 298.6 1200.3 288.5" fill="none" stroke="#a5a248" stroke-width="1.0" stroke-linecap="round" stroke-linejoin="round"/>
<path d="M1216.3 267.8 L1222.2 259.6 V296.7 M1216.8 296.7 H1227.0" fill="none" stroke="#a5a248" stroke-width="1.0" stroke-linecap="round" stroke-linejoin="round"/>
<path d="M962.0 473.9 L976.5 519.0 L990.9 473.9" fill="none" stroke="#a5a248" stroke-width="1.0" stroke-linecap="round" stroke-linejoin="round"/>
<path d="M1008.3 473.9 V519.0 H1017.2 C1038.9 519.0 1038.9 473.9 1017.2 473.9 Z" fill="none" stroke="#a5a248" stroke-width="1.0" stroke-linecap="round" stroke-linejoin="round"/>
<path d="M1057.8 483.8 L1065.8 473.9 V519.0 M1058.5 519.0 H1072.3" fill="none" stroke="#a5a248" stroke-width="1.0" stroke-linecap="round" stroke-linejoin="round"/>
<path d="M1201.0 479.8 L1215.2 524.4 L1229.4 479.8" fill="none" stroke="#a5a248" stroke-width="1.0" stroke-linecap="round" stroke-linejoin="round"/>
<clipPath id="trc"><rect x="858" y="291.7" width="400" height="8.4"/></clipPath><g clip-path="url(#trc)">
<path d="M1022.6 270.4 C1019.6 260.3 1002.8 258.5 1002.8 280.9 C1002.8 303.3 1019.6 301.5 1022.6 291.4" fill="none" stroke="#e08a2c" stroke-width="1.4" stroke-linecap="round" stroke-linejoin="round"/>
<path d="M1039.2 270.4 L1045.0 262.2 V299.6 M1039.7 299.6 H1049.8" fill="none" stroke="#e08a2c" stroke-width="1.4" stroke-linecap="round" stroke-linejoin="round"/>
<path d="M1083.2 262.2 H1069.2 L1067.9 279.0 C1072.4 273.4 1085.0 273.4 1085.0 286.9 C1085.0 303.3 1068.8 303.3 1067.0 292.1" fill="none" stroke="#e08a2c" stroke-width="1.4" stroke-linecap="round" stroke-linejoin="round"/>
<path d="M1200.3 267.8 C1197.3 257.7 1180.0 255.9 1180.0 278.2 C1180.0 300.4 1197.3 298.6 1200.3 288.5" fill="none" stroke="#e08a2c" stroke-width="1.4" stroke-linecap="round" stroke-linejoin="round"/>
<path d="M1216.3 267.8 L1222.2 259.6 V296.7 M1216.8 296.7 H1227.0" fill="none" stroke="#e08a2c" stroke-width="1.4" stroke-linecap="round" stroke-linejoin="round"/>
</g>
<text x="817.1" y="369.4" font-size="28.5" textLength="44.4" lengthAdjust="spacingAndGlyphs" fill="rgba(255,235,235,0.72)" stroke="rgba(255,235,235,0.72)" stroke-width="0.5">HVCC</text>
<text x="760" y="362.5" font-size="12.6" textLength="16" lengthAdjust="spacingAndGlyphs" fill="rgba(255,200,200,0.16)" stroke="rgba(255,200,200,0.16)" stroke-width="0.5">475</text>
<text transform="translate(997,359.2) rotate(-90)" x="-16" y="9.85" font-size="27.5" textLength="32" lengthAdjust="spacingAndGlyphs" fill="rgba(255,255,255,0.72)" font-weight="normal">LXA</text>
<text transform="translate(1087.3,359.2) rotate(-90)" x="-16" y="7.75" font-size="21.6" textLength="32" lengthAdjust="spacingAndGlyphs" fill="rgba(255,255,255,0.72)" font-weight="normal">BSTA</text>
<text transform="translate(1182.8,358.8) rotate(-90)" x="-18" y="11.5" font-size="32.1" textLength="36" lengthAdjust="spacingAndGlyphs" fill="rgba(150,150,150,0.5)" font-weight="bold">GND</text>
<g transform="translate(3.5,0)">
<text transform="translate(1182.8,358.8) rotate(-90)" x="-16.25" y="10.15" font-size="28.4" textLength="32.5" lengthAdjust="spacingAndGlyphs" fill="rgba(175,175,175,0.35)" font-weight="normal">GND</text>
</g>
<g transform="translate(-3.5,0)">
<text transform="translate(1182.8,358.8) rotate(-90)" x="-16.25" y="10.15" font-size="28.4" textLength="32.5" lengthAdjust="spacingAndGlyphs" fill="rgba(175,175,175,0.35)" font-weight="normal">GND</text>
</g>
<text transform="translate(1182.8,358.8) rotate(-90)" x="-16.5" y="10.15" font-size="28.4" textLength="33" lengthAdjust="spacingAndGlyphs" fill="#e6e6e6" font-weight="bold">GND</text>
<text x="912.95" y="602.3" font-size="27.9" textLength="43.7" lengthAdjust="spacingAndGlyphs" fill="rgba(255,235,235,0.72)" stroke="rgba(255,235,235,0.72)" stroke-width="0.5">BSTA</text>
<text x="1070.4" y="602.3" font-size="27.9" textLength="44.8" lengthAdjust="spacingAndGlyphs" fill="rgba(255,235,235,0.72)" stroke="rgba(255,235,235,0.72)" stroke-width="0.5">HVCC</text>
<text x="1165.75" y="602.3" font-size="27.9" textLength="44.7" lengthAdjust="spacingAndGlyphs" fill="rgba(255,235,235,0.72)" stroke="rgba(255,235,235,0.72)" stroke-width="0.5">HVCC</text>
<text x="1179.75" y="768.95" font-size="13.3" textLength="11.3" lengthAdjust="spacingAndGlyphs" fill="rgba(255,215,215,0.75)" font-weight="normal">FB</text>
<text transform="translate(1129.2,1063.4) rotate(-90)" x="-8.9" y="4.75" font-size="13.3" textLength="17.8" lengthAdjust="spacingAndGlyphs" fill="rgba(255,215,215,0.6)" font-weight="normal">VDD</text>
<text transform="translate(1157.5,1086) rotate(-90)" x="-8.9" y="4.75" font-size="13.3" textLength="17.8" lengthAdjust="spacingAndGlyphs" fill="rgba(255,225,225,0.8)" font-weight="normal">VCC</text>
<text transform="translate(1136.3,1148) rotate(-45)" x="-8.9" y="4.75" font-size="13.3" textLength="17.8" lengthAdjust="spacingAndGlyphs" fill="rgba(255,225,225,0.75)" font-weight="normal">VCC</text>
<text transform="translate(1157.5,1177.8) rotate(-90)" x="-8.8" y="4.75" font-size="13.3" textLength="17.6" lengthAdjust="spacingAndGlyphs" fill="rgba(200,240,250,0.8)" font-weight="normal">VCC</text>
<text transform="translate(1157.5,1280) rotate(-90)" x="-8.8" y="4.75" font-size="13.3" textLength="17.6" lengthAdjust="spacingAndGlyphs" fill="rgba(200,240,250,0.8)" font-weight="normal">VCC</text>
<text x="1100" y="1178.9" font-size="24.9" textLength="31" lengthAdjust="spacingAndGlyphs" fill="rgba(255,235,235,0.78)" font-weight="normal">VCC</text>
<text x="1183.85" y="1175.95" font-size="18.3" textLength="31.5" lengthAdjust="spacingAndGlyphs" fill="rgba(255,235,235,0.78)" font-weight="normal">VBUS</text>
<text x="1236" y="1175.95" font-size="18.3" textLength="8" lengthAdjust="spacingAndGlyphs" fill="rgba(255,235,235,0.78)" font-weight="normal">V</text>
<text x="1062" y="1246.500" font-size="57.500" font-weight="bold" textLength="80" lengthAdjust="spacingAndGlyphs" fill="rgba(225,225,225,0.85)">GND</text>
<text x="1105" y="1268.45" font-size="25.0" textLength="31" lengthAdjust="spacingAndGlyphs" fill="rgba(165,163,165,0.5)" font-weight="normal">GND</text>
<text x="1096" y="1268.45" font-size="25.0" textLength="31" lengthAdjust="spacingAndGlyphs" fill="rgba(165,163,165,0.35)" font-weight="normal">GND</text>
<text x="1099.75" y="1268.45" font-size="25.0" textLength="31.5" lengthAdjust="spacingAndGlyphs" fill="#e6e6e6" font-weight="normal">GND</text>
<text x="1189.1" y="1268.45" font-size="25.0" textLength="31" lengthAdjust="spacingAndGlyphs" fill="rgba(165,163,165,0.5)" font-weight="normal">GND</text>
<text x="1180.1" y="1268.45" font-size="25.0" textLength="31" lengthAdjust="spacingAndGlyphs" fill="rgba(165,163,165,0.35)" font-weight="normal">GND</text>
<text x="1183.85" y="1268.45" font-size="25.0" textLength="31.5" lengthAdjust="spacingAndGlyphs" fill="#e6e6e6" font-weight="normal">GND</text>
<circle cx="1119.100" cy="1326" r="10.100" fill="none" stroke="#b8b440" stroke-width="0.950"/><circle cx="1101.300" cy="1326" r="10.100" fill="none" stroke="#b8b440" stroke-width="0.950"/>
<clipPath id="pur"><rect x="1090" y="1330.300" width="150" height="40"/></clipPath><g clip-path="url(#pur)"><circle cx="1119.100" cy="1326" r="10.100" fill="none" stroke="#dca05c" stroke-width="1.050"/><circle cx="1101.300" cy="1326" r="10.100" fill="none" stroke="#dca05c" stroke-width="1.050"/></g>
<path d="M1090 1357.500 H1129.200 M1129.200 1352.700 V1362.800 M1098 1360 L1101 1363 M1181.500 1346.800 V1331.400 Q1200 1338.500 1217.700 1340 M1217.700 1365.200 V1369" fill="none" stroke="#dca05c" stroke-width="1.300"/>
<path d="M1137.500 649 A11.500 11.500 0 1 1 1150 664" fill="none" stroke="#c4b62c" stroke-width="1.100"/><path d="M1156 685.400 H1159.500" stroke="#e8d020" stroke-width="1.100"/>
<path d="M1115.500 641 V668 Q1114.500 683 1102 684.500 H1090" fill="none" stroke="#b8a82c" stroke-width="1.100"/>
<defs><pattern id="grid" x="593.9" y="236.9" width="22.88" height="22.88" patternUnits="userSpaceOnUse"><rect x="0" y="0" width="1.1" height="1.1" fill="#fff" fill-opacity="0.36"/></pattern></defs><path d="M578 233 H1237 V1369 H578Z M1090 806 V1004 H1214.500 V806Z" fill-rule="evenodd" fill="url(#grid)"/><rect x="1090" y="806" width="124.500" height="198" fill="url(#grid)" opacity="0.25"/></g></svg><!--/PCB-->
<!--FILEMENU--><div id="fm" class="abs menu" style="left:12px;top:109px;width:532px;height:592.5px"><div class="it hl" style="top:1px"><svg width="32" height="34" viewBox="0 0 32 34" style="top:7px"><defs><linearGradient id="ng" x1="0" y1="0" x2="0.3" y2="1"><stop offset="0" stop-color="#e6eeff"/><stop offset="1" stop-color="#a6c4fa"/></linearGradient></defs><path d="M6 4 H20.5 L26.5 10 V28 H6Z" fill="url(#ng)" stroke="#1f7fe0" stroke-width="1"/><path d="M20.5 4 V10 H26.5Z" fill="#3f8fe8"/></svg><b>New Project...</b></div>
<div class="it" style="top:49px"><svg width="32" height="34" viewBox="0 0 32 34" style="top:7px"><path d="M0.5 14.5 H7 V10.5 H0.5Z" fill="#e8a020"/><path d="M0.5 14.5 V31.5 H27.5 L31.5 19.5 H28 V14.5Z" fill="#f6c24a" stroke="#d48c10"/><path d="M6.500 0.500 H22 L27.5 6 V22 H6.500Z" fill="#dceafc" stroke="#4a7fe0" stroke-width="1.4"/><path d="M22 0.5 V6 H27.5" fill="#a8c4f4" stroke="#4a7fe0"/><g stroke="#7a90c8" stroke-width="2"><path d="M10 7 H19 M10 11 H24 M10 15 H24"/></g><path d="M4.5 31 L8 20.5 H31 L27.5 31Z" fill="#fbd060" stroke="#d48c10"/><path d="M6 30 L9 22 H18 L15 30Z" fill="#fde9a8"/></svg><b>Open Project...</b></div>
<div class="sep" style="top:97px"></div>
<div class="it" style="top:101px"><b>Open Project Folder...</b></div>
<div class="sep" style="top:149px"></div>
<div class="it" style="top:153px"><svg width="32" height="34" viewBox="0 0 32 34" style="top:7px"><g fill="none" stroke="#3f7fd0" stroke-width="2"><path d="M3 9 V3 H10"/><path d="M29 24 V30 H22"/><rect x="17.500" y="3" width="12" height="9" fill="#cfeaf8" stroke-width="2.4"/><path d="M19 15.5 H28"/></g><path d="M6 16 H16 V19 H18 V23 H14 V21 H9 V23 H6Z M2 31 V26 L6 23 H19 L22 26 V31Z" fill="#f08000"/><g fill="#fff"><rect x="9" y="17" width="4" height="3"/><rect x="5" y="26" width="12" height="2.200"/><rect x="12" y="23" width="3" height="2"/></g></svg><b>Collaboration Client...</b></div>
<div class="it" style="top:201px"><svg width="32" height="34" viewBox="0 0 32 34" style="top:7px"><g transform="translate(2,2) scale(1)"><path d="M0 0 H23 L28 5 V28 H0Z" fill="#c4c4ea" stroke="#7474b8" stroke-width="1.2"/><path d="M0.6 27.400 H27.400" stroke="#5858a8" stroke-width="2"/><path d="M1.6 1.2 V26" stroke="#e0e0f8" stroke-width="1.6"/><path d="M6 0 V11 H22.500 V0" fill="#e8eefc" stroke="#505884" stroke-width="2"/><rect x="9.500" y="4" width="9" height="4" fill="#8094cc"/><path d="M3.500 28 V14.500 H25.500 V28" fill="#dfe8f8" stroke="#505884" stroke-width="2.200"/><path d="M9.500 19 H18.500 M9.500 23 H18.500" stroke="#8094cc" stroke-width="2"/></g></svg><b>Save Project</b></div>
<div class="it" style="top:249px"><svg width="32" height="34" viewBox="0 0 32 34" style="top:7px"><g transform="translate(2,6.5) scale(0.86)"><path d="M0 0 H23 L28 5 V28 H0Z" fill="#c4c4ea" stroke="#7474b8" stroke-width="1.2"/><path d="M0.6 27.400 H27.400" stroke="#5858a8" stroke-width="2"/><path d="M1.6 1.2 V26" stroke="#e0e0f8" stroke-width="1.6"/><path d="M6 0 V11 H22.500 V0" fill="#e8eefc" stroke="#505884" stroke-width="2"/><rect x="9.500" y="4" width="9" height="4" fill="#8094cc"/><path d="M3.500 28 V14.500 H25.500 V28" fill="#dfe8f8" stroke="#505884" stroke-width="2.200"/><path d="M9.500 19 H18.500 M9.500 23 H18.500" stroke="#8094cc" stroke-width="2"/></g><g transform="translate(6,2) scale(0.86)"><path d="M0 0 H23 L28 5 V28 H0Z" fill="#c4c4ea" stroke="#7474b8" stroke-width="1.2"/><path d="M0.6 27.400 H27.400" stroke="#5858a8" stroke-width="2"/><path d="M1.6 1.2 V26" stroke="#e0e0f8" stroke-width="1.6"/><path d="M6 0 V11 H22.500 V0" fill="#e8eefc" stroke="#505884" stroke-width="2"/><rect x="9.500" y="4" width="9" height="4" fill="#8094cc"/><path d="M3.500 28 V14.500 H25.500 V28" fill="#dfe8f8" stroke="#505884" stroke-width="2.200"/><path d="M9.500 19 H18.500 M9.500 23 H18.500" stroke="#8094cc" stroke-width="2"/></g></svg><b>Save Project As...</b></div>
<div class="it" style="top:297px"><b>Recent Project</b><i class="arr"></i></div>
<div class="it" style="top:345px"><svg width="32" height="34" viewBox="0 0 32 34" style="top:7px"><rect x="3" y="3" width="28" height="26" fill="#fff" stroke="#1f5fc8" stroke-width="2"/><rect x="3" y="3" width="28" height="6" fill="#1f5fc8"/><rect x="24" y="4.500" width="2" height="2" fill="#dfe8ff"/><rect x="27.500" y="4.500" width="2" height="2" fill="#dfe8ff"/><path d="M11.500 13 L22.500 24 M22.500 13 L11.500 24" stroke="#e25555" stroke-width="4.200"/></svg><b>Close Project</b></div>
<div class="sep" style="top:393px"></div>
<div class="it" style="top:397px"><svg width="32" height="34" viewBox="0 0 32 34" style="top:7px"><rect x="1" y="18.500" width="30" height="9" fill="#ffd166" stroke="#f08800" stroke-width="2"/><rect x="4.500" y="1" width="23" height="21.500" fill="#c2e0f8" stroke="#4a80d0" stroke-width="1.6"/><rect x="5.500" y="2" width="21" height="5.500" fill="#1a4a3a"/><g fill="#fff"><rect x="8" y="3.500" width="2" height="2"/><rect x="11.500" y="3.500" width="2" height="2"/><rect x="15" y="3.500" width="2" height="2"/></g><path d="M8.500 11 L13 14.500 L8.500 18" fill="none" stroke="#2f6fe0" stroke-width="1.600"/><path d="M14 18.500 H23" stroke="#2f6fe0" stroke-width="1.600"/></svg><b>Scripting</b></div>
<div class="it" style="top:445px"><b>Import</b><i class="arr"></i></div>
<div class="it" style="top:493px"><b>Export</b><i class="arr"></i></div>
<div class="sep" style="top:541px"></div>
<div class="it" style="top:545px"><svg width="32" height="34" viewBox="0 0 32 34" style="top:7px"><path d="M16 1.500 H23.500 V10 M23.500 22 V28.500 H16" fill="none" stroke="#1f5fc8" stroke-width="1.800"/><path d="M0.500 1 H16 V32 L0.500 28.500Z" fill="#4f82d2"/><path d="M16.500 16.500 H27" stroke="#f08800" stroke-width="3.600"/><path d="M25 10.500 L32 16.500 L25 22.500Z" fill="#f08800"/></svg><b>Exit</b></div></div><!--/FILEMENU-->
<!--SUBMENU--><div id="sm" class="abs menu" style="left:541.8px;top:602.4px;width:557px;height:946.2px"><div class="it" style="top:-0.4px"><svg width="32" height="34" viewBox="0 0 32 34" style="top:7px"><defs><radialGradient id="gg" cx="0.4" cy="0.3" r="0.8"><stop offset="0" stop-color="#4f86f6"/><stop offset="1" stop-color="#3560e0"/></radialGradient></defs><circle cx="16" cy="16" r="16" fill="url(#gg)"/><path d="M19 2 L26 5 L28 11 L26 16 L27 22 L23 27 L19 26 L20 20 L16 17 L12 18 L13 14 L17 12 L16 8 L19 6Z" fill="#16c444"/><path d="M3 14 L7 13 L8 17 L11 20 L13 25 L11 29 L6 25 L3 20Z" fill="#16c444"/><path d="M21 14 L24 15 L23 18 L21 17Z" fill="#3f74ec"/></svg><b>NetList...</b></div>
<div class="sep" style="top:47.6px"></div>
<div class="it" style="top:51.6px"><svg width="32" height="34" viewBox="0 0 32 34" style="top:7px"><rect x="2" y="2" width="28" height="28" fill="#0a1c3c"/><rect x="8" y="4" width="16" height="24" fill="#18d888"/><g fill="#127a3c"><rect x="10" y="6" width="8" height="4"/><rect x="10" y="12" width="8" height="1.800"/><rect x="10" y="16" width="8" height="5"/><rect x="10" y="23" width="8" height="1.800"/><rect x="20" y="6" width="2" height="4"/><rect x="20" y="12" width="2" height="3"/><rect x="20" y="17" width="2" height="3"/><rect x="20" y="22" width="2" height="3"/></g><g fill="#a8c8f0"><rect x="4" y="4" width="2.200" height="4"/><rect x="4" y="12" width="2.200" height="5"/><rect x="4" y="22" width="2.200" height="5"/><rect x="26" y="4" width="2.200" height="4"/><rect x="26" y="12" width="2.200" height="5"/><rect x="26" y="22" width="2.200" height="5"/></g></svg><b>Gerber...</b></div>
<div class="it" style="top:99.6px"><svg width="32" height="34" viewBox="0 0 32 34" style="top:7px"><rect x="2" y="10.300" width="30" height="21.500" fill="#1eb082"/><rect x="2" y="13.700" width="30" height="14" fill="#d49410"/><g fill="#fbc42c"><rect x="4" y="15.500" width="26" height="2"/><rect x="4" y="19.500" width="26" height="2"/><rect x="4" y="23.500" width="26" height="2"/></g><rect x="10" y="2.300" width="13.700" height="3" fill="#8a8a8a"/><rect x="10" y="2.300" width="13.700" height="1.200" fill="#303030"/><rect x="14.400" y="4" width="5.400" height="22" fill="#2a2a2a"/><rect x="16" y="5" width="2.200" height="8" fill="#e8e8e8"/><g fill="#fff"><rect x="16" y="15" width="2.200" height="2.200"/><rect x="16" y="19" width="2.200" height="2.200"/><rect x="16" y="23" width="2.200" height="2.200"/></g></svg><b>NC...</b></div>
<div class="sep" style="top:147.6px"></div>
<div class="it" style="top:151.6px"><svg width="32" height="34" viewBox="0 0 32 34" style="top:7px"><path d="M2.5 2.500 H17 L24 9 V29.500 H2.5Z" fill="#d4e2ff" stroke="#a8c0f2"/><path d="M17 2.500 V9 H24" fill="#b4ccf8" stroke="#a8c0f2"/><rect x="4" y="12.200" width="28" height="13.500" fill="#1a78a8"/><text x="6" y="23.5" font-family="Liberation Mono" font-weight="bold" font-size="13" fill="#fff" textLength="24" lengthAdjust="spacingAndGlyphs">odb</text></svg><b>ODB++...</b></div>
<div class="it" style="top:199.6px"><b>IPC2581</b></div>
<div class="it" style="top:247.6px"><svg width="32" height="34" viewBox="0 0 32 34" style="top:7px"><path d="M0.5 2.500 H15 L22 9 V29.500 H0.5Z" fill="#d4e2ff" stroke="#a8c0f2"/><path d="M15 2.500 V9 H22" fill="#b4ccf8" stroke="#a8c0f2"/><rect x="0" y="11.500" width="32" height="22.500" fill="#1a78a8"/><text x="2" y="21.5" font-family="Liberation Mono" font-weight="bold" font-size="11" fill="#fff" textLength="17" lengthAdjust="spacingAndGlyphs">IPC</text><text x="1" y="32.5" font-family="Liberation Mono" font-weight="bold" font-size="12" fill="#fff" textLength="29" lengthAdjust="spacingAndGlyphs">356A</text></svg><b>IPC356A...</b></div>
<div class="sep" style="top:295.6px"></div>
<div class="it" style="top:299.6px"><svg width="32" height="34" viewBox="0 0 32 34" style="top:7px"><path d="M0 6 H4 V1 H18 V6 H28 V10 H32 V22 H28 V28.500 H0Z" fill="#18a832"/><path d="M3 8 H7 V4 H15 V8 H26 V12 H29 V20 H26 V25.500 H3Z" fill="#156a22"/><rect x="7" y="11" width="9" height="9" fill="#222"/><rect x="9" y="4.500" width="4.500" height="3" fill="#f4c430"/><g fill="#f4c430"><rect x="20" y="10.500" width="5" height="2"/><rect x="21" y="14.300" width="7" height="2.300"/><rect x="21" y="18.300" width="7" height="2.300"/><rect x="20" y="22" width="4" height="2"/></g><g fill="#e8ffe8"><rect x="6" y="9.500" width="1.500" height="1.500"/><rect x="10" y="9.500" width="1.500" height="1.500"/><rect x="14" y="9.500" width="1.500" height="1.500"/><rect x="6" y="21" width="1.500" height="1.500"/><rect x="10" y="21" width="1.500" height="1.500"/><rect x="14" y="21" width="1.500" height="1.500"/><rect x="4.500" y="13" width="1.500" height="1.500"/><rect x="4.500" y="17" width="1.500" height="1.500"/><rect x="17" y="13" width="1.500" height="1.500"/><rect x="17" y="17" width="1.500" height="1.500"/></g></svg><b>DXF...</b></div>
<div class="it" style="top:347.6px"><svg width="32" height="34" viewBox="0 0 32 34" style="top:7px"><path d="M2.5 2.500 H17 L24 9 V29.500 H2.5Z" fill="#d4e2ff" stroke="#a8c0f2"/><path d="M17 2.500 V9 H24" fill="#b4ccf8" stroke="#a8c0f2"/><rect x="4" y="12.200" width="28" height="13.500" fill="#1a78a8"/><text x="8" y="23.5" font-family="Liberation Mono" font-weight="bold" font-size="12" fill="#fff" textLength="20" lengthAdjust="spacingAndGlyphs">IDF</text></svg><b>IDF...</b></div>
<div class="sep" style="top:395.6px"></div>
<div class="it" style="top:399.6px"><svg width="32" height="34" viewBox="0 0 32 34" style="top:7px"><defs><linearGradient id="ab" x1="0" y1="0" x2="0" y2="1"><stop offset="0" stop-color="#4a90e8"/><stop offset="1" stop-color="#1f5fd0"/></linearGradient><linearGradient id="ar" x1="0" y1="0" x2="0" y2="1"><stop offset="0" stop-color="#e85060"/><stop offset="1" stop-color="#b02030"/></linearGradient><linearGradient id="ag" x1="0" y1="0" x2="0" y2="1"><stop offset="0" stop-color="#30c050"/><stop offset="1" stop-color="#109030"/></linearGradient></defs><rect x="0" y="1" width="32" height="10" fill="url(#ab)"/><rect x="0" y="11" width="32" height="10.500" fill="url(#ar)"/><rect x="0" y="21.500" width="32" height="9.500" fill="url(#ag)"/><rect x="12.600" y="1" width="7" height="30" fill="#f4c430" stroke="#c89010" stroke-width="1"/><rect x="10.300" y="13.500" width="11.500" height="6" fill="#f0f0e0" stroke="#c8c8b0"/><rect x="13" y="15.700" width="6" height="1.600" fill="#c89010"/></svg><b>Archiving...</b></div>
<div class="it" style="top:447.6px"><b>PDF</b></div>
<div class="sep" style="top:495.6px"></div>
<div class="it" style="top:499.6px"><b>Copy Reference Design</b></div>
<div class="it" style="top:547.6px"><svg width="32" height="34" viewBox="0 0 32 34" style="top:7px"><g fill="#f09010"><rect x="8.5" y="1" width="1.800" height="30"/><rect x="1" y="8.5" width="30" height="1.800"/><rect x="15.1" y="1" width="1.800" height="30"/><rect x="1" y="15.1" width="30" height="1.800"/><rect x="21.7" y="1" width="1.800" height="30"/><rect x="1" y="21.7" width="30" height="1.800"/></g><rect x="5" y="5" width="22" height="22" fill="#2aa040" stroke="#188030" stroke-width="1.400"/><rect x="10.700" y="10.700" width="10.600" height="10.600" fill="#383838"/></svg><b>Placement...</b></div>
<div class="sep" style="top:595.6px"></div>
<div class="it" style="top:599.6px"><b>Pin Delay...</b></div>
<div class="sep" style="top:647.6px"></div>
<div class="it" style="top:651.6px"><svg width="32" height="34" viewBox="0 0 32 34" style="top:7px"><g fill="#4f80d4"><ellipse cx="12" cy="7.500" rx="10.300" ry="5.500"/><path d="M1.700 13 A10.300 5 0 0 0 22.300 13 V17 A10.300 5 0 0 1 1.700 17Z"/><path d="M1.700 20.500 A10.300 5 0 0 0 22.300 20.500 V25.500 A10.300 5 0 0 1 1.700 25.500Z"/></g><ellipse cx="12" cy="6.500" rx="8" ry="3" fill="#6f9ae4"/><path d="M11 24 H24" stroke="#f08800" stroke-width="3.400"/><path d="M22.500 18.500 L30 24 L22.500 29.500Z" fill="#f08800"/><rect x="11" y="21" width="2.500" height="2" fill="#f08800"/></svg><b>DbExport...</b></div>
<div class="it" style="top:699.6px"><b>AreaExport...</b></div>
<div class="sep" style="top:747.6px"></div>
<div class="it" style="top:751.6px"><b>Libraries...</b></div>
<div class="sep" style="top:799.6px"></div>
<div class="it" style="top:803.6px"><b>Pinlist</b></div>
<div class="it" style="top:851.6px"><b>Parameters...</b></div>
<div class="it" style="top:899.6px"><b>Shape</b></div></div><!--/SUBMENU-->
</body></html>
